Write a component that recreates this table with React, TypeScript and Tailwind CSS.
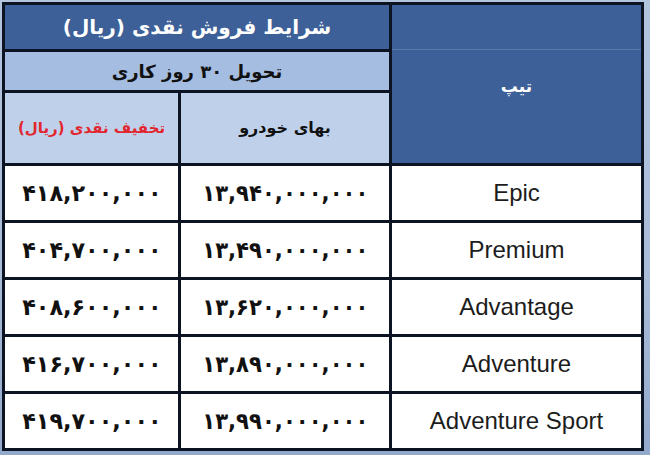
import React from 'react';

interface Trim {
  name: string;
  price: string;
  discount: string;
}

const trims: Trim[] = [
  { name: 'Epic', price: '۱۳,۹۴۰,۰۰۰,۰۰۰', discount: '۴۱۸,۲۰۰,۰۰۰' },
  { name: 'Premium', price: '۱۳,۴۹۰,۰۰۰,۰۰۰', discount: '۴۰۴,۷۰۰,۰۰۰' },
  { name: 'Advantage', price: '۱۳,۶۲۰,۰۰۰,۰۰۰', discount: '۴۰۸,۶۰۰,۰۰۰' },
  { name: 'Adventure', price: '۱۳,۸۹۰,۰۰۰,۰۰۰', discount: '۴۱۶,۷۰۰,۰۰۰' },
  { name: 'Adventure Sport', price: '۱۳,۹۹۰,۰۰۰,۰۰۰', discount: '۴۱۹,۷۰۰,۰۰۰' },
];

const fa = { fontFamily: '"DejaVu Sans", "Noto Sans", sans-serif' };

export default function App() {
  return (
    <div className="w-[650px] h-[455px] bg-[linear-gradient(180deg,#b3c4dd_0%,#a9bcd8_60%,#93a9cb_100%)] pt-[2px] pl-[2px]">
      <div
        dir="rtl"
        className="w-[642px] border-[3px] border-[#0c1424] bg-[#0c1424] grid grid-cols-[249px_208px_173px] grid-rows-[44px_38px_70px_repeat(5,54px)] gap-[3px]"
        style={fa}
      >
        {/* Tipe column, spans the three header rows */}
        <div className="row-span-3 relative bg-[#3c6097] flex items-center justify-center">
          <div className="absolute top-[44px] left-0 right-0 h-px bg-[#5677a8]" />
          <span className="text-white font-bold text-[17px] mt-[6px]">تیپ</span>
        </div>

        <div className="col-span-2 bg-[#3c6097] flex items-center justify-center">
          <span className="text-white font-bold text-[20px]">شرایط فروش نقدی (ریال)</span>
        </div>

        <div className="col-span-2 bg-[#a5bde0] flex items-center justify-center">
          <span className="text-[#111] font-bold text-[18px]">تحویل ۳۰ روز کاری</span>
        </div>

        <div className="bg-[#bfd1ea] flex items-center justify-center">
          <span className="text-[#111] font-bold text-[16px]">بهای خودرو</span>
        </div>
        <div className="bg-[#bfd1ea] flex items-center justify-center">
          <span className="text-[#e2262f] font-bold text-[15px]">تخفیف نقدی (ریال)</span>
        </div>

        {trims.map((t) => (
          <React.Fragment key={t.name}>
            <div className="bg-white flex items-center justify-center">
              <span
                dir="ltr"
                className="text-[#1c1c1c] text-[24px]"
                style={{ fontFamily: '"Liberation Sans", Arial, sans-serif' }}
              >
                {t.name}
              </span>
            </div>
            <div className="bg-white flex items-center justify-center">
              <span dir="ltr" className="inline-block text-[#111] font-bold text-[23px] scale-x-[0.92]">
                {t.price}
              </span>
            </div>
            <div className="bg-white flex items-center justify-center">
              <span dir="ltr" className="inline-block text-[#111] font-bold text-[23px] scale-x-[0.97]">
                {t.discount}
              </span>
            </div>
          </React.Fragment>
        ))}
      </div>
    </div>
  );
}
